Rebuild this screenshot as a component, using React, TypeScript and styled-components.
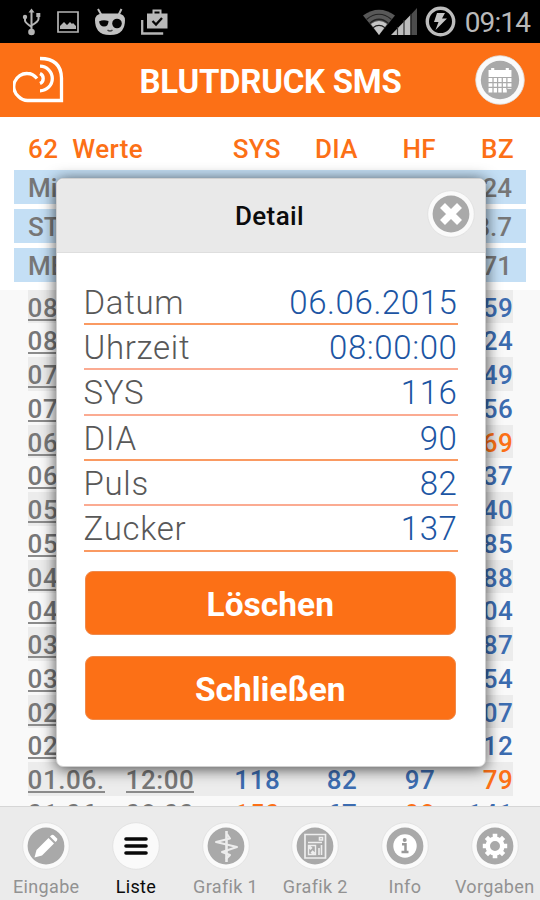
import React from "react";
import styled, { createGlobalStyle } from "styled-components";

const ORANGE = "#fc7016";
const BLUE = "#3c6cb0";

const GlobalStyle = createGlobalStyle`
  * { box-sizing: border-box; }
  body { margin: 0; font-family: Roboto, "Liberation Sans", sans-serif; }
`;

const Screen = styled.div`
  position: relative;
  display: flex;
  flex-direction: column;
  width: 540px;
  height: 900px;
  overflow: hidden;
  background: #f9f9f9;
`;

const StatusBar = styled.div`
  flex: none;
  display: flex;
  align-items: center;
  justify-content: space-between;
  height: 43px;
  padding: 0 10px 0 22px;
  background: #000;
`;

const StatusGroup = styled.div<{ $gap: number }>`
  display: flex;
  align-items: center;
  gap: ${(p) => p.$gap}px;
`;

const Reception = styled.div`
  display: flex;
  align-items: center;
  svg + svg { margin-left: -4px; }
`;

const Clock = styled.span`
  margin-left: 1px;
  font-size: 28px;
  line-height: 43px;
  letter-spacing: -0.9px;
  color: #b9b9b9;
  padding-top: 2px;
`;

const Header = styled.header`
  flex: none;
  display: flex;
  align-items: center;
  justify-content: space-between;
  height: 74px;
  padding: 0 15px 0 13px;
  background: ${ORANGE};
`;

const Title = styled.h1`
  margin: 3px 1px 0 2px;
  font-size: 33px;
  font-weight: 700;
  letter-spacing: -0.25px;
  color: #fff;
`;

const Summary = styled.section`
  flex: none;
  display: flex;
  flex-direction: column;
  gap: 5px;
  height: 172.5px;
  padding: 0 14px;
  background: #fff;
`;

const columns = "98px 80px 75px 77px 78px 78px";

const HeadRow = styled.div`
  display: grid;
  grid-template-columns: ${columns};
  height: 48px;
  padding: 3px 14px 0;
  font-size: 26px;
  line-height: 58px;
  font-weight: 500;
  letter-spacing: 0.4px;
  color: ${ORANGE};
`;

const Cell = styled.span<{ $alert?: boolean }>`
  text-align: right;
  color: ${(p) => (p.$alert ? ORANGE : "inherit")};
`;

const HeadLabel = styled.span`
  grid-column: span 2;
  display: flex;
  gap: 14px;
`;

const SummaryRow = styled.div`
  display: flex;
  justify-content: space-between;
  height: 34px;
  padding: 1px 14px 0;
  background: #c4dff5;
  font-size: 26px;
  line-height: 35px;
  font-weight: 500;
  color: #777;
`;

const List = styled.div`
  flex: 1;
  min-height: 0;
  overflow: hidden;
  padding: 0 27px 0 27.5px;
`;

const ListRow = styled.div`
  display: grid;
  grid-template-columns: ${columns};
  height: 33.75px;
  font-size: 26px;
  line-height: 36px;
  font-weight: 500;
  letter-spacing: 0.6px;
  color: ${BLUE};
  &:nth-child(odd) { background: #ececec; }
`;

const Stamp = styled.span`
  justify-self: start;
  height: 31px;
  color: #777;
  border-bottom: 2px solid #8b8b8b;
`;

const NavBar = styled.nav`
  flex: none;
  display: grid;
  grid-template-columns: repeat(6, 89.7px);
  justify-content: end;
  height: 94px;
  padding: 15px 0.5px 0 0;
  border-top: 1px solid #d6d6d6;
  background: #ebebeb;
`;

const NavItem = styled.div<{ $active?: boolean }>`
  display: flex;
  flex-direction: column;
  align-items: center;
  gap: 6px;
  font-size: 18px;
  line-height: 22px;
  letter-spacing: 0.35px;
  white-space: nowrap;
  color: ${(p) => (p.$active ? "#0a0a0a" : "#929292")};
`;

const Dialog = styled.section`
  position: absolute;
  left: 55.5px;
  top: 178px;
  width: 430px;
  height: 588.5px;
  display: flex;
  flex-direction: column;
  border-radius: 7px;
  overflow: hidden;
  background: #fff;
  border: 1px solid #d0d0d0;
  box-shadow: 0 2px 15px rgba(0, 0, 0, 0.7);
`;

const DialogHeader = styled.div`
  flex: none;
  display: grid;
  grid-template-columns: 1fr auto 1fr;
  align-items: center;
  height: 73.5px;
  padding: 0 10px;
  background: #e9e9e9;
  border-bottom: 1px solid #dedede;
`;

const DialogTitle = styled.h2`
  grid-column: 2;
  margin: 2px 2px 0 0;
  font-size: 26px;
  font-weight: 500;
  letter-spacing: 0.4px;
  color: #0c0c0c;
`;

const CloseSlot = styled.div`
  display: flex;
  justify-content: flex-end;
  padding-bottom: 3px;
`;

const Details = styled.dl`
  margin: 27px 27px 0;
`;

const DetailRow = styled.div<{ $soft: boolean }>`
  display: flex;
  justify-content: space-between;
  height: 45.4px;
  border-bottom: 2px solid ${(p) => (p.$soft ? "#fbab92" : "#fa9a62")};
  font-size: 33px;
  line-height: 45px;
  font-weight: 300;
`;

const Term = styled.dt`
  color: #585858;
  letter-spacing: 0.7px;
`;

const Value = styled.dd`
  margin: 0;
  color: #1c55a3;
  letter-spacing: 0.6px;
`;

const Actions = styled.div`
  display: flex;
  flex-direction: column;
  gap: 21px;
  margin: 19px 28.5px 0 28px;
`;

const Button = styled.button`
  height: 64px;
  padding: 3px 0 0;
  border: 1px solid #ef8a4c;
  border-radius: 8px;
  background: ${ORANGE};
  color: #fff;
  font-family: inherit;
  font-size: 33.5px;
  font-weight: 700;
`;

type Glyph = "calendar" | "close" | "pencil" | "bars" | "pulse" | "chart" | "info" | "gear";

const glyphs: Record<Glyph, React.ReactNode> = {
  calendar: (
    <>
      <path d="M13 14.500h2.500v-2h3v2h11v-2h3v2H35v6.500H13z" fill="#fff" />
      <path d="M13 22h22v10.500h-4.500v3.500H13z" fill="#fff" />
      <path d="M17.300 22v14.500M21.700 22v14.500M26.200 22v14.500M30.600 22v11M12 26.400h24M12 31h24" stroke="#aaa" strokeWidth="1.200" />
    </>
  ),
  close: <path d="M15.500 15.500l17 17M32.500 15.500l-17 17" stroke="#fff" strokeWidth="7" />,
  pencil: (
    <g fill="#fff">
      <path d="M12.500 35.500l2-7.500 12-12 5.500 5.500-12 12z" />
      <path d="M28 14.500l1.300-1.300q1.300-1 2.500 0l3 3q1 1.300 0 2.500l-1.300 1.300z" />
    </g>
  ),
  bars: <path d="M14 17h20M14 24h20M14 31h20" stroke="#080808" strokeWidth="3.600" strokeLinecap="round" />,
  pulse: (
    <g fill="none" stroke="#ececec" strokeLinejoin="round">
      <path d="M24.500 9v31" strokeWidth="2.600" />
      <path d="M25 12l3 4.500-14 3.500 21 5-15 5 8 3-4 4" strokeWidth="2" />
    </g>
  ),
  chart: (
    <g fill="none" stroke="#eee">
      <path d="M14 12.500h20.500v23.500H14z" strokeWidth="1.700" />
      <path d="M17 20.500h14M28.500 18v-2.500h3V18zM30.500 23v10M28 26v7" strokeWidth="1.600" />
      <path d="M17.500 23.500h7v9h-7z" strokeWidth="1.400" />
      <path d="M18 24.500l2.500 2.500M20.500 29.500l3 2.500" strokeWidth="3" />
    </g>
  ),
  info: (
    <>
      <circle cx="24" cy="24" r="11.700" fill="#fff" />
      <circle cx="23.700" cy="18" r="2" fill="#999" />
      <path d="M21 22.300h3.500v7.700M20.500 30h7" fill="none" stroke="#999" strokeWidth="2.500" />
    </>
  ),
  gear: (
    <g fill="none" stroke="#fff">
      <circle cx="24" cy="24" r="7.300" strokeWidth="4.600" />
      <path
        d="M24 11.800v4M24 32.200v4M11.800 24h4M32.200 24h4M15.400 15.400l3 3M29.600 29.600l3 3M15.400 32.600l3-3M29.600 18.400l3-3"
        strokeWidth="4.600"
      />
    </g>
  ),
};

function RoundIcon({ glyph, size = 48, rim = "#fafafa" }: { glyph: Glyph; size?: number; rim?: string }) {
  return (
    <svg width={size} height={size} viewBox="0 0 48 48">
      <circle cx="24" cy="24" r="23.300" fill={rim} stroke="#dedede" strokeWidth=".8" />
      {glyph !== "bars" && <circle cx="24" cy="24" r="18.400" fill="#a9a9a9" />}
      {glyphs[glyph]}
    </svg>
  );
}

const UsbIcon = () => (
  <svg width="20" height="28" viewBox="0 0 20 28" fill="none" stroke="#b5b5b5" strokeWidth="2">
    <path d="M9.500 3v20M3 9v3.500q0 2 6.500 6.500M16.500 7v4q0 2.500-7 6.500" />
    <circle cx="9.500" cy="24" r="3.300" fill="#b5b5b5" stroke="none" />
    <circle cx="3" cy="9" r="2.200" fill="#b5b5b5" stroke="none" />
    <path d="M14.300 5h4v4h-4zM6.500 4.500l3-4 3 4z" fill="#b5b5b5" stroke="none" />
  </svg>
);

const PictureIcon = () => (
  <svg width="22" height="22" viewBox="0 0 22 22">
    <path d="M1 1h20v20H1z" fill="none" stroke="#b5b5b5" strokeWidth="1.700" />
    <path d="M3 18v-3l4-4 3 3 3-3 2 2 1-1 3 3v3z" fill="#b5b5b5" />
  </svg>
);

const RobotIcon = () => (
  <svg width="32" height="28" viewBox="0 0 32 28">
    <path d="M4 1l4 7M27.500 1L24 8" stroke="#bbb" strokeWidth="2" />
    <path d="M8 5.500h16q7 .5 7 7 0 6-3 10-3.500 4.500-12 4.500T4 22.500q-3-4-3-10 0-6.500 7-7z" fill="#c2c2c2" />
    <path d="M5 13.500q4-2 9.500-.5 0 5.500-4.500 5.500-4 0-5-5z" fill="#050505" />
    <circle cx="23" cy="15.500" r="4.800" fill="#050505" />
    <path d="M13.500 22q2.500 2 5 0" fill="none" stroke="#444" strokeWidth="1.500" />
  </svg>
);

const UpdateBagIcon = () => (
  <svg width="28" height="26" viewBox="0 0 28 26">
    <path d="M1.200 11v13.500h21" fill="none" stroke="#b5b5b5" strokeWidth="2.300" />
    <path d="M6 4.500h20.500v15H6z" fill="#b9b9b9" />
    <path d="M12.500 5V1.500h7V5" fill="none" stroke="#b9b9b9" strokeWidth="2" />
    <path d="M11.500 12l3.500 3.500 6-6.500" fill="none" stroke="#080808" strokeWidth="2.300" />
  </svg>
);

const WifiIcon = () => (
  <svg width="32" height="26" viewBox="0 0 32 26">
    <path d="M0 6.500Q16-5 32 6.500L16 26z" fill="#585858" />
    <path d="M8 15q8-6 16 0l-8 11z" fill="#c6c6c6" />
    <path d="M3.500 10.500Q16 0 28.500 10.500M6.500 14.500Q16 6 25.500 14.500M10 18.700q6-4.500 12 0" fill="none" stroke="#222" strokeWidth="1.200" />
  </svg>
);

const SignalIcon = () => (
  <svg width="26" height="27" viewBox="0 0 26 27">
    <path d="M20.500 6L26 0v27h-5.500z" fill="#4c4c4c" />
    <path d="M0 27L19.500 7v20z" fill="#bdbdbd" />
    <path d="M6.500 19v8M13 12v15M20 6v21" stroke="#333" strokeWidth="1.200" />
  </svg>
);

const ChargeIcon = () => (
  <svg width="31" height="31" viewBox="0 0 31 31">
    <circle cx="15.500" cy="15.500" r="13.200" fill="none" stroke="#bdbdbd" strokeWidth="3.400" />
    <path d="M12 7h8l-3 5.500h5L10.500 24l3-8H9z" fill="#c5c5c5" />
  </svg>
);

const HeartLogo = () => (
  <svg width="52" height="48" viewBox="0 0 52 48" fill="none" stroke="#fff" strokeWidth="3.300">
    <path d="M24 22.500Q20 17.500 14.500 17.500A13 13 0 0 0 5.500 40.500Q9.500 44.500 14.500 44.500H48.500V22Q48 2.500 27 2.500" />
    <path d="M27 10.200a12.300 12.300 0 0 1 0 24.600M27 17.500a5.500 5.500 0 0 1 0 10" />
  </svg>
);

const summaries = [
  ["Mittelwert", "124"],
  ["STABW", "38.7"],
  ["MEDIAN", "171"],
];

type Reading = { date: string; time: string; sys: number; dia: number; hf: number; bz: number; alerts?: string[] };

const readings: Reading[] = [
  { date: "08.06.", time: "12:00", sys: 121, dia: 84, hf: 78, bz: 159 },
  { date: "08.06.", time: "08:00", sys: 118, dia: 82, hf: 80, bz: 124 },
  { date: "07.06.", time: "12:00", sys: 124, dia: 85, hf: 76, bz: 149 },
  { date: "07.06.", time: "08:00", sys: 119, dia: 81, hf: 79, bz: 156 },
  { date: "06.06.", time: "12:00", sys: 122, dia: 83, hf: 84, bz: 169, alerts: ["bz"] },
  { date: "06.06.", time: "08:00", sys: 116, dia: 90, hf: 82, bz: 137 },
  { date: "05.06.", time: "12:00", sys: 125, dia: 86, hf: 81, bz: 140 },
  { date: "05.06.", time: "08:00", sys: 117, dia: 80, hf: 77, bz: 85 },
  { date: "04.06.", time: "12:00", sys: 120, dia: 82, hf: 83, bz: 88 },
  { date: "04.06.", time: "08:00", sys: 123, dia: 84, hf: 75, bz: 104 },
  { date: "03.06.", time: "12:00", sys: 118, dia: 79, hf: 80, bz: 87 },
  { date: "03.06.", time: "08:00", sys: 121, dia: 83, hf: 82, bz: 154 },
  { date: "02.06.", time: "12:00", sys: 119, dia: 81, hf: 78, bz: 107 },
  { date: "02.06.", time: "08:00", sys: 122, dia: 85, hf: 79, bz: 112 },
  { date: "01.06.", time: "12:00", sys: 118, dia: 82, hf: 97, bz: 79, alerts: ["bz"] },
  { date: "01.06.", time: "08:00", sys: 150, dia: 67, hf: 98, bz: 141, alerts: ["sys", "hf"] },
];

const fields = ["sys", "dia", "hf", "bz"] as const;

const details = [
  ["Datum", "06.06.2015"],
  ["Uhrzeit", "08:00:00"],
  ["SYS", "116"],
  ["DIA", "90"],
  ["Puls", "82"],
  ["Zucker", "137"],
];

const tabs: { glyph: Glyph; label: string }[] = [
  { glyph: "pencil", label: "Eingabe" },
  { glyph: "bars", label: "Liste" },
  { glyph: "pulse", label: "Grafik 1" },
  { glyph: "chart", label: "Grafik 2" },
  { glyph: "info", label: "Info" },
  { glyph: "gear", label: "Vorgaben" },
];

export default function App() {
  return (
    <>
      <GlobalStyle />
      <Screen>
        <StatusBar>
          <StatusGroup $gap={15}>
            <UsbIcon />
            <PictureIcon />
            <RobotIcon />
            <UpdateBagIcon />
          </StatusGroup>
          <StatusGroup $gap={8}>
            <Reception>
              <WifiIcon />
              <SignalIcon />
            </Reception>
            <ChargeIcon />
            <Clock>09:14</Clock>
          </StatusGroup>
        </StatusBar>
        <Header>
          <HeartLogo />
          <Title>BLUTDRUCK SMS</Title>
          <RoundIcon glyph="calendar" size={50} />
        </Header>
        <Summary>
          <HeadRow>
            <HeadLabel>
              <span>62</span>
              <span>Werte</span>
            </HeadLabel>
            <Cell>SYS</Cell>
            <Cell>DIA</Cell>
            <Cell>HF</Cell>
            <Cell>BZ</Cell>
          </HeadRow>
          {summaries.map(([label, value]) => (
            <SummaryRow key={label}>
              <span>{label}</span>
              <span>{value}</span>
            </SummaryRow>
          ))}
        </Summary>
        <List>
          {readings.map((r) => (
            <ListRow key={r.date + r.time}>
              <Stamp>{r.date}</Stamp>
              <Stamp>{r.time}</Stamp>
              {fields.map((f) => (
                <Cell key={f} $alert={r.alerts?.includes(f)}>
                  {r[f]}
                </Cell>
              ))}
            </ListRow>
          ))}
        </List>
        <NavBar>
          {tabs.map((t) => (
            <NavItem key={t.label} $active={t.glyph === "bars"}>
              <RoundIcon glyph={t.glyph} />
              {t.label}
            </NavItem>
          ))}
        </NavBar>
        <Dialog>
          <DialogHeader>
            <DialogTitle>Detail</DialogTitle>
            <CloseSlot>
              <RoundIcon glyph="close" />
            </CloseSlot>
          </DialogHeader>
          <Details>
            {details.map(([term, value], i) => (
              <DetailRow key={term} $soft={i === 1 || i === 2 || i === 4}>
                <Term>{term}</Term>
                <Value>{value}</Value>
              </DetailRow>
            ))}
          </Details>
          <Actions>
            <Button>Löschen</Button>
            <Button>Schließen</Button>
          </Actions>
        </Dialog>
      </Screen>
    </>
  );
}
